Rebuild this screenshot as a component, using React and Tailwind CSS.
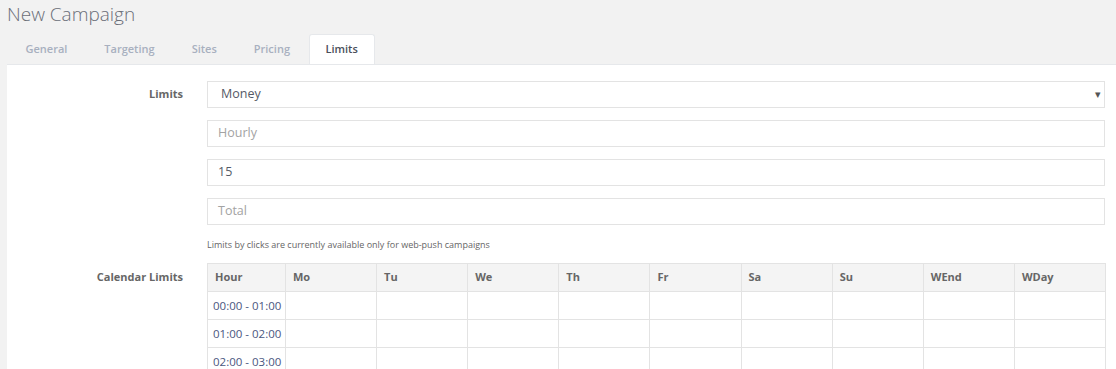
const tabs = ["General", "Targeting", "Sites", "Pricing", "Limits"];
const days = ["Mo", "Tu", "We", "Th", "Fr", "Sa", "Su", "WEnd", "WDay"];
const hours = ["00:00 - 01:00", "01:00 - 02:00", "02:00 - 03:00"];

export default function App() {
  return (
    <div className="w-[1116px] h-[369px] overflow-hidden bg-[#f2f2f2] font-['Open_Sans',sans-serif]">
      <h1 className="pl-[7px] pt-[1px] h-[34px] text-[19px] font-light text-[#6b6f78] leading-[26px]">New Campaign</h1>

      {/* tabs */}
      <div className="flex pl-[7px] h-[30px]">
        {tabs.map((t) => (
          <div
            key={t}
            className={
              t === "Limits"
                ? "px-[16px] bg-white border border-b-0 border-[#e6e8eb] rounded-t-[3px] text-[11px] font-semibold text-[#4a4f5a] flex items-center justify-center"
                : "px-[18.5px] text-[11px] font-semibold text-[#a8b0bf] flex items-center justify-center"
            }
          >
            {t}
          </div>
        ))}
      </div>

      {/* panel */}
      <div className="ml-[7px] bg-white border-t border-[#e6e8eb] pt-[16px] h-[320px]">
        <div className="flex">
          <div className="w-[176px] text-right text-[11px] font-bold text-[#666] pt-[5px]">Limits</div>
          <div className="ml-[24px] w-[898px] flex flex-col gap-[12px]">
            <div className="h-[27px] border border-[#e3e3e3] flex items-center justify-between pl-[13px] pr-[3px] text-[12.5px] text-[#555a66]">
              <span>Money</span>
              <span className="text-[11px] text-[#555]">▾</span>
            </div>
            <div className="h-[27px] border border-[#e3e3e3] flex items-center pl-[10px] text-[12.5px] text-[#a3a3a3]">Hourly</div>
            <div className="h-[27px] border border-[#e3e3e3] flex items-center pl-[10px] text-[12.5px] text-[#555a66]">15</div>
            <div className="h-[27px] border border-[#e3e3e3] flex items-center pl-[10px] text-[12.5px] text-[#a3a3a3]">Total</div>
            <div className="mt-[2px] text-[9px] text-[#666] leading-[12px]">Limits by clicks are currently available only for web-push campaigns</div>
          </div>
        </div>

        <div className="flex mt-[12px]">
          <div className="w-[176px] text-right text-[11px] font-bold text-[#666] pt-[6px]">Calendar Limits</div>
          <div className="ml-[24px] w-[899px]">
            <table className="w-full border-collapse text-[11px] table-fixed">
              <thead>
                <tr className="h-[28px] bg-[#f4f4f4]">
                  <th className="w-[78px] border border-[#e3e3e3] text-left pl-[7px] font-bold text-[#666]">Hour</th>
                  {days.map((d) => (
                    <th key={d} className="border border-[#e3e3e3] text-left pl-[7px] font-bold text-[#666]">{d}</th>
                  ))}
                </tr>
              </thead>
              <tbody>
                {hours.map((h) => (
                  <tr key={h} className="h-[28px]">
                    <td className="border border-[#e3e3e3] pl-[5px] text-[11.5px] text-[#4a5680] whitespace-nowrap">{h}</td>
                    {days.map((d) => (
                      <td key={d} className="border border-[#e3e3e3]"></td>
                    ))}
                  </tr>
                ))}
              </tbody>
            </table>
          </div>
        </div>
      </div>
    </div>
  );
}
